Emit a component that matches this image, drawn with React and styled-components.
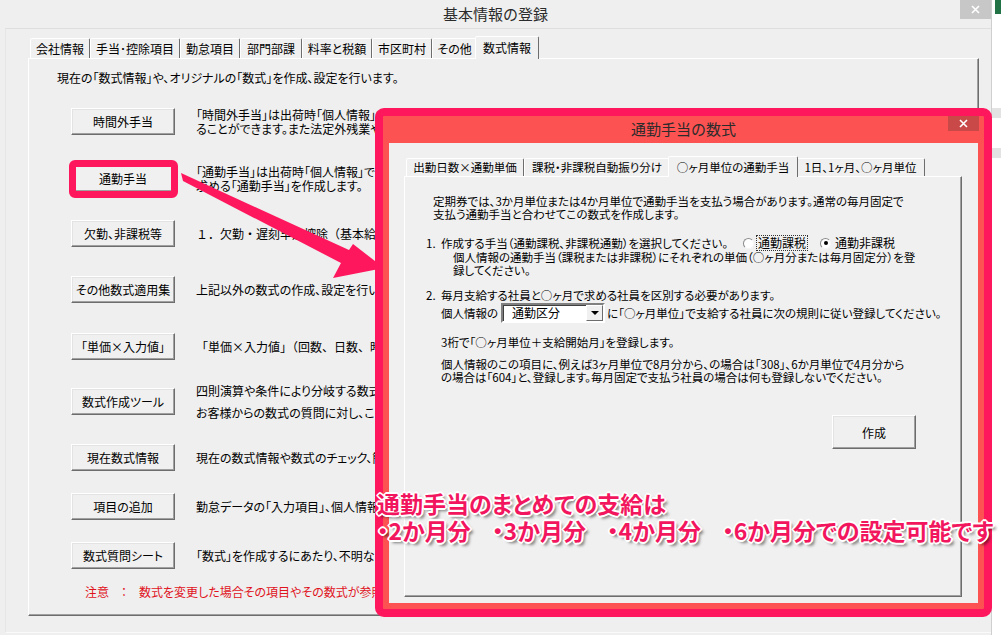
import React from "react";
import styled, { createGlobalStyle } from "styled-components";

const GlobalStyle = createGlobalStyle`
  html, body { margin: 0; padding: 0; }
  body {
    width: 1001px; height: 635px; overflow: hidden;
    background: #f0f0f0;
    font-family: "Noto Sans CJK JP", "Noto Sans", sans-serif;
    font-size: 12px; color: #000;
  }
  * { box-sizing: border-box; }
`;

const Screen = styled.div`
  position: relative;
  width: 1001px;
  height: 635px;
  display: flex;
  overflow: hidden;
`;

/* ---------- main window ---------- */
const MainWindow = styled.div`
  width: 991px;
  height: 635px;
  flex: none;
  display: flex;
  flex-direction: column;
  background: #efefef;
`;

const TitleBar = styled.div`
  height: ${p => p.$h}px;
  flex: none;
  display: grid;
  grid-template-columns: 1fr auto 1fr;
  align-items: start;
`;

const Title = styled.div`
  grid-column: 2;
  font-size: 15px;
  line-height: ${p => p.$h}px;
  color: #2b2b2b;
  white-space: nowrap;
`;

const CloseBtn = styled.div`
  grid-column: 3;
  justify-self: end;
  width: 31px;
  height: ${p => p.$h}px;
  margin-right: ${p => p.$mr}px;
  background: ${p => p.$bg};
  display: flex;
  align-items: center;
  justify-content: center;
`;

const XIcon = () => (
  <svg width="9" height="9" viewBox="0 0 9 9">
    <path d="M1 1 L8 8 M8 1 L1 8" stroke="#fff" strokeWidth="1.6" />
  </svg>
);

const Client = styled.div`
  flex: 1;
  margin: 0 0 2px 5px;
  border-top: 1px solid #dedede;
  border-left: 1px solid #e6e6e6;
  border-bottom: 1px solid #fafafa;
  padding: 7px 12px 16px 22px;
  display: flex;
  flex-direction: column;
`;

const TabStrip = styled.div`
  height: ${p => p.$h}px;
  flex: none;
  display: flex;
  align-items: flex-end;
  padding-left: ${p => p.$pl}px;
`;

const Tab = styled.div`
  width: ${p => p.$w}px;
  height: ${p => (p.$active ? p.$h + 3 : p.$h)}px;
  margin: 0 ${p => (p.$active ? -2 : 0)}px ${p => (p.$active ? -1 : 0)}px;
  padding-bottom: 1px;
  border: 1px solid;
  border-bottom: none;
  border-color: #ffffff #6d6d6d transparent #ffffff;
  border-radius: 2px 2px 0 0;
  background: #f0f0f0;
  display: flex;
  align-items: center;
  justify-content: center;
  white-space: nowrap;
  font-size: ${p => p.$fs}px;
  font-feature-settings: "palt" 1;
  position: relative;
  z-index: ${p => (p.$active ? 2 : 1)};
`;

const TabPanel = styled.div`
  flex: 1;
  border: 1px solid;
  border-color: #ffffff #6d6d6d #6d6d6d #ffffff;
  box-shadow: inset -1px -1px 0 #a0a0a0;
  display: flex;
  flex-direction: column;
  min-height: 0;
  font-size: ${p => p.$fs}px;
`;

const Intro = styled.div`
  margin: 12px 0 0 28px;
  line-height: 14px;
  white-space: nowrap;
  font-feature-settings: "palt" 1;
`;

const Row = styled.div`
  margin: ${p => p.$mt}px 0 0 42px;
  height: 27px;
  display: grid;
  grid-template-columns: 104px auto;
  grid-template-rows: 27px;
  column-gap: 21px;
  align-items: center;
`;

const WinButton = styled.button`
  width: ${p => p.$w || 104}px;
  height: ${p => p.$hgt || 27}px;
  padding: 0;
  font-family: inherit;
  font-size: 12px;
  font-feature-settings: "palt" 1;
  color: #000;
  background: #f0f0f0;
  border: 1px solid;
  border-color: #ffffff #6d6d6d #6d6d6d #ffffff;
  box-shadow: inset -1px -1px 0 #a0a0a0, inset 1px 1px 0 #e3e3e3;
  white-space: nowrap;
  position: relative;
  align-self: ${p => p.$self || "auto"};
  margin: ${p => p.$m || "0"};
  &::after {
    content: "";
    display: ${p => (p.$highlight ? "block" : "none")};
    position: absolute;
    left: -3px; right: -4px; top: -6px; bottom: -7px;
    border: 7px solid #ff175e;
    border-radius: 6px;
  }
`;

const Desc = styled.div`
  white-space: nowrap;
  line-height: ${p => (p.$loose ? 22 : 14)}px;
  font-feature-settings: ${p => (p.$mono ? "normal" : '"palt" 1')};
`;

const Note = styled.div`
  margin: 16px 0 0 56px;
  color: #e0121c;
  line-height: 14px;
  white-space: nowrap;
  font-feature-settings: "palt" 1;
`;

/* ---------- background excel strip ---------- */
const BackStrip = styled.div`
  flex: 1;
  background: #ffffff;
  border-left: 1px solid #cfcfcf;
  display: flex;
  flex-direction: column;
`;
const StripGreen = styled.div`
  height: 14px;
  margin-left: 3px;
  background: #217346;
`;
const StripBand = styled.div`
  height: 10px;
  margin-top: ${p => p.$mt}px;
  background: #e3e3e3;
`;

/* ---------- dialog ---------- */
const Dialog = styled.div`
  position: absolute;
  left: 375px;
  top: 108px;
  width: 617px;
  height: 509px;
  border: 8px solid #ff175e;
  border-radius: 9px;
  background: #fd5252;
  display: flex;
  flex-direction: column;
  z-index: 5;
`;

const DialogClient = styled.div`
  flex: 1;
  margin: 0 6px 6px 6px;
  background: #f0f0f0;
  padding: 13px 16px 6px 15px;
  display: flex;
  flex-direction: column;
`;

const Para = styled.div`
  margin: ${p => p.$mt}px 0 0 ${p => p.$ml}px;
  line-height: 13px;
  white-space: nowrap;
  font-feature-settings: "palt" 1;
`;

const Item = styled.div`
  margin: ${p => p.$mt}px 0 0 21px;
  display: grid;
  grid-template-columns: 15px auto;
  line-height: 14px;
  white-space: nowrap;
  font-feature-settings: "palt" 1;
`;

const ItemLine = styled.div`
  display: grid;
  grid-template-columns: 302px auto;
  align-items: center;
`;

const Sub = styled.div`
  padding-left: ${p => p.$pl}px;
  line-height: 13px;
  margin-top: ${p => p.$mt || 0}px;
`;

const Radios = styled.div`
  display: flex;
  align-items: center;
  font-size: 12px;
`;

const Radio = styled.span`
  width: 11px;
  height: 11px;
  border-radius: 50%;
  border: 1px solid;
  border-color: #8a8a8a #f6f6f6 #f6f6f6 #8a8a8a;
  background: #fff;
  display: inline-flex;
  align-items: center;
  justify-content: center;
  flex: none;
  &::after {
    content: "";
    width: 4px;
    height: 4px;
    border-radius: 50%;
    background: #000;
    display: ${p => (p.$checked ? "block" : "none")};
  }
`;

const RadioLabel = styled.span`
  margin: 0 ${p => p.$mr}px 0 ${p => p.$ml}px;
  padding: 0 1px;
  outline: ${p => (p.$focus ? "1px dotted #333" : "none")};
  line-height: 14px;
`;

const ComboLine = styled.div`
  margin: 1px 0 0 0;
  display: flex;
  align-items: center;
  white-space: nowrap;
  font-feature-settings: "palt" 1;
`;

const Combo = styled.div`
  width: 104px;
  height: 20px;
  margin: 0 2px 0 3px;
  background: #fff;
  border: 2px solid;
  border-color: #808080 #ffffff #ffffff #808080;
  box-shadow: inset 1px 1px 0 #404040;
  display: flex;
  align-items: center;
  justify-content: space-between;
  padding-left: 9px;
  font-size: 12px;
`;

const ComboBtn = styled.div`
  width: 17px;
  height: 16px;
  background: #f0f0f0;
  border: 1px solid;
  border-color: #ffffff #6d6d6d #6d6d6d #ffffff;
  display: flex;
  align-items: center;
  justify-content: center;
  &::after {
    content: "";
    border-left: 4px solid transparent;
    border-right: 4px solid transparent;
    border-top: 4px solid #000;
  }
`;

const Annotation = styled.div`
  position: absolute;
  left: 377px;
  top: 490px;
  z-index: 6;
  color: #f2165e;
  font-family: "Noto Sans CJK JP", sans-serif;
  font-weight: 700;
  font-size: 23px;
  line-height: 27px;
  white-space: nowrap;
  font-feature-settings: "palt" 1;
  text-shadow:
    -1px -1px 0 #fff, 1px -1px 0 #fff, -1px 1px 0 #fff, 1px 1px 0 #fff,
    0 -2px 0 #fff, 0 2px 0 #fff, -2px 0 0 #fff, 2px 0 0 #fff,
    3px 3px 3px rgba(0, 0, 0, 0.5);
`;

const AnnoLine = styled.div`
  word-spacing: ${p => p.$ws || 0}px;
`;

const ArrowSvg = styled.svg`
  position: absolute;
  left: 170px;
  top: 160px;
  z-index: 4;
  overflow: visible;
`;

const rows = [
  { label: "時間外手当", mt: 23, desc: ["「時間外手当」は出荷時「個人情報」で", "ることができます。また法定外残業や休"] },
  { label: "通勤手当", mt: 30, hl: true, desc: ["「通勤手当」は出荷時「個人情報」で登", "求める「通勤手当」を作成します。"] },
  { label: "欠勤、非課税等", mt: 28, mono: true, desc: ["１．欠勤・遅刻早退控除（基本給"] },
  { label: "その他数式適用集", mt: 29, desc: ["上記以外の数式の作成、設定を行い"] },
  { label: "「単価×入力値」", mt: 30, mono: true, desc: ["「単価×入力値」（回数、日数、時"] },
  { label: "数式作成ツール", mt: 28, loose: true, desc: ["四則演算や条件により分岐する数式を", "お客様からの数式の質問に対し、この"] },
  { label: "現在数式情報", mt: 29, desc: ["現在の数式情報や数式のチェック、簡"] },
  { label: "項目の追加", mt: 22, desc: ["勤怠データの「入力項目」、個人情報"] },
  { label: "数式質問シート", mt: 22, desc: ["「数式」を作成するにあたり、不明な点"] },
];

const mainTabs = [
  ["会社情報", 60], ["手当･控除項目", 90], ["勤怠項目", 60], ["部門部課", 62],
  ["料率と税額", 70], ["市区町村", 60], ["その他", 45], ["数式情報", 64],
];
const dlgTabs = [
  ["出勤日数×通勤単価", 118], ["課税・非課税自動振り分け", 146],
  ["○ヶ月単位の通勤手当", 130], ["1日、1ヶ月、○ヶ月単位", 129],
];

export default function App() {
  return (
    <Screen>
      <GlobalStyle />
      <MainWindow>
        <TitleBar $h={28}>
          <Title $h={28}>基本情報の登録</Title>
          <CloseBtn $h={19} $mr={0} $bg="#c7c7c7"><XIcon /></CloseBtn>
        </TitleBar>
        <Client>
          <TabStrip $h={22} $pl={2}>
            {mainTabs.map(([t, w], i) => (
              <Tab key={t} $w={w} $h={20} $fs={12} $active={i === mainTabs.length - 1}>{t}</Tab>
            ))}
          </TabStrip>
          <TabPanel $fs={12}>
            <Intro>現在の「数式情報」や、オリジナルの「数式」を作成、設定を行います。</Intro>
            {rows.map(r => (
              <Row key={r.label} $mt={r.mt}>
                <WinButton $highlight={r.hl}>{r.label}</WinButton>
                <Desc $loose={r.loose} $mono={r.mono}>
                  {r.desc.map((l, i) => <div key={i}>{l}</div>)}
                </Desc>
              </Row>
            ))}
            <Note>注意　：　数式を変更した場合その項目やその数式が参照す</Note>
          </TabPanel>
        </Client>
      </MainWindow>
      <BackStrip>
        <StripGreen />
        <StripBand $mt={94} />
        <StripBand $mt={30} />
      </BackStrip>

      <ArrowSvg width="220" height="125" viewBox="170 160 220 125">
        <polygon
          points="181,173 349,250 353,244 384,268 333,278 341,263 183,181"
          fill="#ff175e"
        />
      </ArrowSvg>

      <Dialog>
        <TitleBar $h={27}>
          <Title $h={26}>通勤手当の数式</Title>
          <CloseBtn $h={15} $mr={5} $bg="#c94848"><XIcon /></CloseBtn>
        </TitleBar>
        <DialogClient>
          <TabStrip $h={20} $pl={2}>
            {dlgTabs.map(([t, w], i) => (
              <Tab key={t} $w={w} $h={18} $fs={11.5} $active={i === 2}>{t}</Tab>
            ))}
          </TabStrip>
          <TabPanel $fs={11.5}>
            <Para $mt={18} $ml={28}>
              <div>定期券では、3か月単位または4か月単位で通勤手当を支払う場合があります。通常の毎月固定で</div>
              <div>支払う通勤手当と合わせてこの数式を作成します。</div>
            </Para>
            <Item $mt={15}>
              <span>1.</span>
              <div>
                <ItemLine>
                  <span>作成する手当（通勤課税、非課税通勤）を選択してください。</span>
                  <Radios>
                    <Radio />
                    <RadioLabel $ml={3} $mr={13} $focus>通勤課税</RadioLabel>
                    <Radio $checked />
                    <RadioLabel $ml={3} $mr={0}>通勤非課税</RadioLabel>
                  </Radios>
                </ItemLine>
                <Sub $pl={12} $mt={1}>個人情報の通勤手当（課税または非課税）にそれぞれの単価（○ヶ月分または毎月固定分）を登</Sub>
                <Sub $pl={12}>録してください。</Sub>
              </div>
            </Item>
            <Item $mt={11}>
              <span>2.</span>
              <div>
                <div>毎月支給する社員と○ヶ月で求める社員を区別する必要があります。</div>
                <ComboLine>
                  個人情報の
                  <Combo>
                    通勤区分
                    <ComboBtn />
                  </Combo>
                  に「○ヶ月単位」で支給する社員に次の規則に従い登録してください。
                </ComboLine>
                <Sub $pl={0} $mt={13}>3桁で「○ヶ月単位＋支給開始月」を登録します。</Sub>
                <Sub $pl={0} $mt={9}>個人情報のこの項目に、例えば3ヶ月単位で8月分から、の場合は「308」、6か月単位で4月分から</Sub>
                <Sub $pl={0}>の場合は「604」と、登録します。毎月固定で支払う社員の場合は何も登録しないでください。</Sub>
              </div>
            </Item>
            <WinButton $w={84} $hgt={34} $self="flex-end" $m="31px 45px 0 0">作成</WinButton>
          </TabPanel>
        </DialogClient>
      </Dialog>

      <Annotation>
        <AnnoLine>通勤手当のまとめての支給は</AnnoLine>
        <AnnoLine $ws={16}>・2か月分 ・3か月分 ・4か月分 ・6か月分での設定可能です</AnnoLine>
      </Annotation>
    </Screen>
  );
}
